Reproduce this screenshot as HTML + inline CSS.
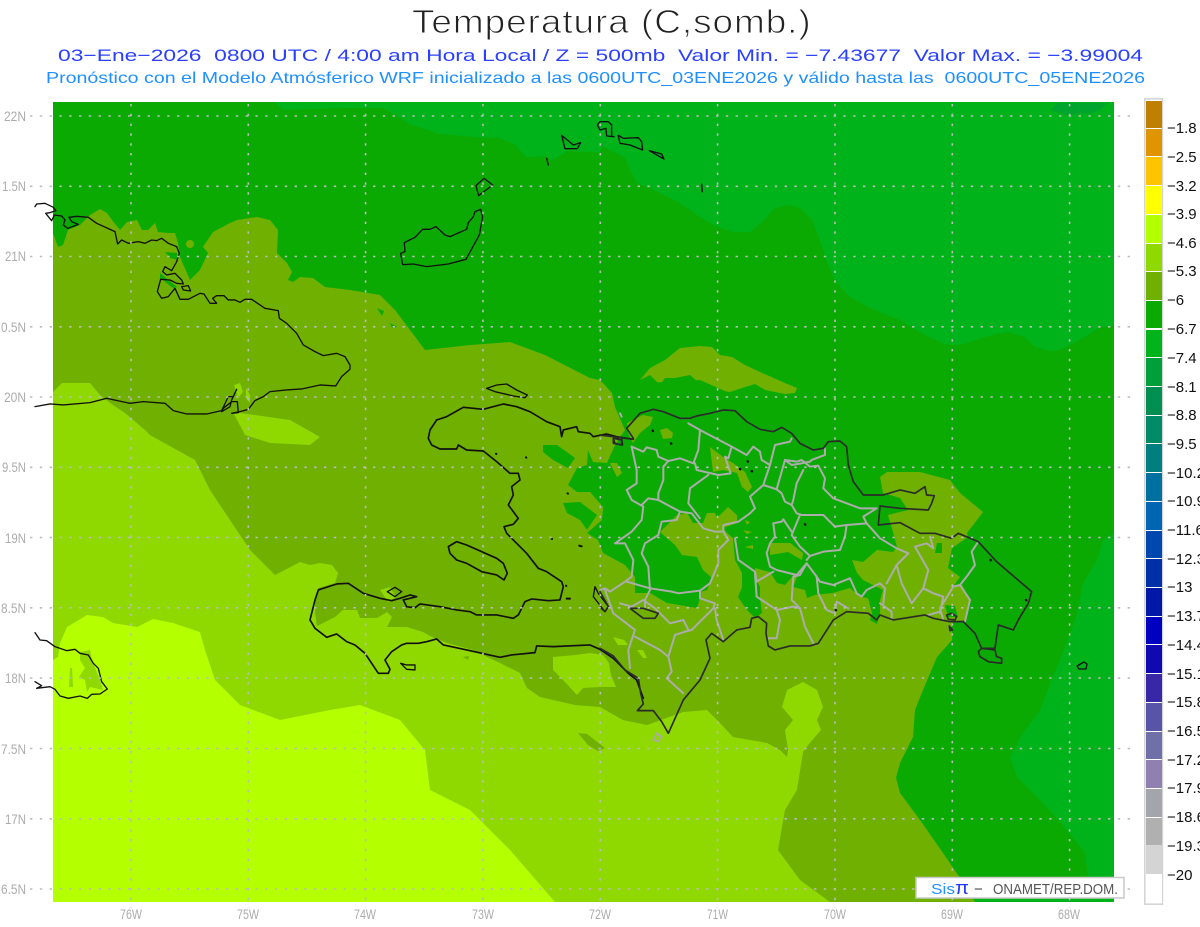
<!DOCTYPE html>
<html lang="es">
<head>
<meta charset="utf-8">
<title>Temperatura (C,somb.)</title>
<style>
html,body{margin:0;padding:0;background:#fff;width:1200px;height:927px;overflow:hidden}
svg{display:block}
text{font-family:"Liberation Sans",sans-serif;white-space:pre}
.g{fill:none;stroke:#acacac;stroke-width:6;stroke-linejoin:round;stroke-linecap:round}
.k{fill:none;stroke:#111;stroke-width:4;stroke-linejoin:round;stroke-linecap:round}
.d{fill:none;stroke:#2a2a2a;stroke-width:5;stroke-linejoin:round;stroke-linecap:round}
.t{fill:#acacac;font-size:14px}
.c{fill:#111;font-size:15px}
</style>
</head>
<body>
<svg width="1200" height="927" viewBox="0 0 1200 927" xmlns="http://www.w3.org/2000/svg">
<rect width="1200" height="927" fill="#fff"/>

<!-- titles -->
<text transform="translate(412,33) scale(1.12,1)" x="0" y="0" font-size="33" fill="#222" stroke="#fff" stroke-width="0.9" textLength="356" lengthAdjust="spacing">Temperatura (C,somb.)</text>
<text x="58" y="61" font-size="17" fill="#2b40ff" textLength="1085" lengthAdjust="spacingAndGlyphs">03−Ene−2026  0800 UTC / 4:00 am Hora Local / Z = 500mb  Valor Min. = −7.43677  Valor Max. = −3.99004</text>
<text x="46" y="83" font-size="16" fill="#1e90ff" textLength="1099" lengthAdjust="spacingAndGlyphs">Pronóstico con el Modelo Atmósferico WRF inicializado a las 0600UTC_03ENE2026 y válido hasta las  0600UTC_05ENE2026</text>

<!-- map fills -->
<svg x="53" y="102" width="1061" height="800" viewBox="53 102 1061 800">
<rect x="53" y="102" width="1061" height="800" fill="#0aaa03"/>
<!-- NE lighter -->
<polygon fill="#00b31a" points="274,102 283,110 345,108 383,108 410,124 440,134 475,137 500,138 515,145 522,152 526,157 535,157 545,156 552,160 560,156 568,151 590,152 600,152 602,146 610,150 625,158 630,170 637,183 650,188 680,203 700,217 715,226 733,232 750,232 762,222 775,208 787,205 800,208 812,220 820,240 827,262 836,282 850,297 870,308 900,320 925,335 945,344 960,345 985,337 1007,332 1025,337 1035,347 1050,351 1060,350 1085,337 1100,327 1114,326 1114,102"/>
<polygon fill="#00a52d" points="1050,110 1058,103 1107,103 1100,110 1093,113 1067,115"/>
<!-- SE lighter -->
<polygon fill="#00b31a" points="1114,533 1103,540 1097,560 1083,583 1077,613 1063,653 1050,683 1040,710 1023,733 1010,757 1017,777 1040,800 1067,830 1085,853 1088,877 1080,880 975,897 975,902 1114,902"/>
<!-- main olive -->
<polygon fill="#70b000" points="53,233 58,247 63,245 68,230 80,225 90,215 100,209 107,213 112,220 120,230 127,222 137,220 142,230 148,230 155,223 158,232 168,233 175,233 178,243 180,257 190,280 200,270 208,253 203,247 213,232 230,223 237,220 257,217 270,220 278,230 277,253 287,263 292,272 288,280 293,282 300,277 313,278 325,287 350,290 380,295 395,310 410,330 425,350 470,345 510,342 545,355 590,378 600,380 612,393 880,477 887,472 920,472 950,480 960,493 983,512 967,533 968,537 952,548 948,568 960,577 952,588 962,585 970,600 965,620 952,623 952,640 937,657 923,690 915,710 913,737 900,763 896,778 900,793 920,820 943,853 960,878 975,902 53,902"/>
<!-- olive blob north -->
<polygon fill="#70b000" points="640,380 650,368 665,360 680,348 700,346 712,347 720,355 732,357 745,365 760,372 785,383 797,388 795,393 785,394 765,390 755,384 742,388 730,392 705,388 690,375 675,378 665,378 660,385 650,375"/>
<!-- DR green -->
<polygon fill="#0aaa03" points="612,393 615,407 625,430 615,445 607,463 593,462 588,450 587,465 577,468 568,485 577,492 590,492 603,507 602,520 587,533 598,540 603,553 625,565 635,577 635,593 650,593 667,603 697,608 702,592 712,590 738,597 747,610 755,618 762,613 760,597 760,587 755,577 755,568 770,572 777,583 785,585 792,577 797,577 793,587 805,590 807,598 815,595 833,593 850,588 860,597 868,598 872,613 870,620 877,624 880,613 880,600 883,590 863,580 857,573 852,560 863,562 877,550 893,552 897,547 893,532 888,515 908,510 900,498 883,493 880,477 880,460 700,380 612,385"/>
<polygon fill="#0aaa03" points="543,445 557,445 575,458 568,468 553,460 543,452"/>
<polygon fill="#0aaa03" points="563,503 580,502 597,515 587,530 580,520 567,513"/>
<!-- olive patches over DR green -->
<polygon fill="#70b000" points="660,532 675,545 682,555 697,557 703,570 712,578 707,590 700,592 700,613 743,613 738,597 742,587 742,573 735,560 733,538 727,533 723,528 737,523 737,515 728,507 717,518 715,513 707,513 703,523 693,523 687,513 677,515"/>
<polygon fill="#70b000" points="660,430 667,428 673,433 672,438 663,439"/>
<polygon fill="#70b000" points="627,423 643,415 653,417 650,425 640,433 633,443 628,433"/>
<polygon fill="#70b000" points="610,463 617,463 622,473 617,477"/>
<polygon fill="#70b000" points="710,447 723,457 733,463 745,472 752,487 748,492 742,487 737,473 723,470 713,472"/>
<polygon fill="#70b000" points="770,543 790,543 803,553 802,560 788,552 770,555"/>
<polygon fill="#70b000" points="600,503 603,510 600,517"/>
<polygon fill="#70b000" points="745,520 750,522 747,525"/>
<polygon fill="#70b000" points="743,530 752,532 747,534"/>
<polygon fill="#70b000" points="745,547 753,545 753,549"/>
<!-- green spots in olive -->
<polygon fill="#0aaa03" points="937,543 942,543 942,553 935,553"/>
<polygon fill="#0aaa03" points="945,605 955,606 958,617 948,617"/>
<polygon fill="#0aaa03" points="165,252 177,253 178,260 170,258"/>
<polygon fill="#0aaa03" points="160,273 177,287 173,288 160,278"/>
<polygon fill="#0aaa03" points="377,308 384,311 382,316"/>
<polygon fill="#0aaa03" points="390,323 397,327 392,328"/>
<circle cx="190" cy="244" r="4" fill="#70b000"/>
<!-- green2 -->
<polygon fill="#8fd800" points="53,392 62,383 90,383 100,395 113,405 125,413 145,430 150,435 195,460 210,490 250,550 275,575 300,562 310,565 320,563 332,565 338,573 335,583 318,588 315,597 315,613 317,626 335,617 343,610 357,610 360,618 377,618 387,612 392,617 387,627 407,627 423,632 432,637 447,643 473,650 487,657 500,663 520,673 527,688 540,697 575,705 600,707 623,720 647,725 683,712 707,710 720,723 733,737 767,743 780,750 787,757 788,750 785,730 793,720 782,707 787,690 803,682 817,690 823,707 817,720 821,730 808,745 803,752 797,790 785,810 778,850 800,880 830,902 53,902"/>
<polygon fill="#8fd800" points="553,657 575,655 590,653 603,655 609,663 611,675 616,687 600,687 583,688 577,695 563,680 553,670"/>
<polygon fill="#8fd800" points="233,412 255,415 290,420 320,437 310,445 270,443 245,435"/>
<polygon fill="#8fd800" points="234,385 240,383 243,392 238,398"/>
<polygon fill="#8fd800" points="246,388 250,395 250,403 246,398"/>
<polygon fill="#8fd800" points="380,590 390,587 396,597 388,602"/>
<polygon fill="#8fd800" points="370,637 376,634 377,638 371,640"/>
<polygon fill="#8fd800" points="613,637 624,640 628,645 618,645"/>
<polygon fill="#8fd800" points="637,650 643,650 647,658 643,658"/>
<polygon fill="#70b000" points="578,733 587,734 605,748 598,751 588,745"/>
<polygon fill="#70b000" points="463,657 469,656 468,660"/>
<!-- lime -->
<polygon fill="#b4ff00" points="53,660 58,657 60,643 67,627 87,615 103,617 113,623 137,627 153,619 173,623 200,632 205,650 215,680 240,705 280,720 330,710 360,705 400,720 425,750 430,790 470,810 510,850 555,902 53,902"/>
<polygon fill="#8fd800" points="80,652 90,650 92,660 100,680 103,690 90,687 87,692 85,680 79,677 85,668 80,660"/>
<polygon fill="#8fd800" points="70,668 72,668 73,687 69,687"/>
</svg>

<!-- coast: Cuba (zoom 7) -->
<g transform="translate(0,90) scale(.3333)">
<path class="k" d="M105,350 L110,342 L135,340 L160,352 L168,362 L150,368 L137,370 L155,392 L163,375 L185,378 L195,390 L190,405 L203,415 L235,403 L215,395 L207,382 L230,379 L265,382 L290,400 L345,425 L353,462 L365,450 L385,460 L415,455 L435,460 L455,450 L470,452 L485,445 L505,460 L530,470 L538,490 L530,515 L515,542 L495,530 L488,545 L500,555 L525,550 L545,570 L550,582 L530,580 L510,570 L482,568 L472,605 L485,625 L505,620 L525,595 L540,628 L565,628 L600,610 L612,612 L630,640 L650,640 L638,625 L650,617 L672,617 L685,630 L705,630 L720,637 L735,628 L755,628 L795,655 L835,662 L838,685 L860,700 L890,730 L910,765 L945,785 L970,797 L1010,790 L1035,800 L1050,825 L1050,838 L1025,860 L1007,888 L960,885 L905,897 L860,900 L810,905 L790,920 L765,932 L745,958 L720,965 L695,970 L715,968 L712,935 L695,935 L670,955 L665,965 L690,950 L695,930 L710,898 L700,920 L685,920 L665,962 L620,972 L560,972 L520,962 L495,940 L430,935 L390,940 L320,925 L270,938 L190,945 L150,942 L105,950"/>
<path class="k" d="M545,590 L565,587 L572,603 L550,600 Z"/>
</g>
<!-- coast: Jamaica (zoom 10) -->
<g transform="translate(0,600) scale(.3333)">
<path class="k" d="M105,98 L120,120 L140,122 L165,140 L200,152 L225,148 L240,160 L265,165 L280,190 L295,205 L305,245 L322,267 L300,282 L275,283 L262,295 L240,288 L205,295 L180,288 L165,268 L150,260 L110,265 L125,257 L105,245"/>
</g>
<!-- coast: Bahamas (zoom 9) -->
<g transform="translate(380,100) scale(.3333)">
<path class="k" d="M62,460 L75,455 L73,428 L105,412 L128,388 L150,388 L168,380 L195,405 L210,410 L260,388 L265,368 L280,350 L285,335 L302,328 L308,350 L298,405 L258,478 L205,492 L140,500 L100,492 L68,494 Z"/>
<path class="k" d="M288,257 L312,235 L338,255 L296,287 Z"/>
<path class="k" d="M545,106 L580,135 L602,128 L592,146 L555,146 Z"/>
<path class="k" d="M652,75 L660,65 L685,65 L695,75 L695,108 L702,110 L680,108 L678,85 L660,90 Z"/>
<path class="k" d="M715,106 L730,115 L775,113 L785,125 L788,150 L750,135 L720,130 Z"/>
<path class="k" d="M808,152 L845,162 L852,177 Z"/>
<path class="k" d="M500,175 L505,195 M965,253 L967,275"/>
</g>
<!-- coast: Haiti (zoom 6) -->
<g transform="translate(300,380) scale(.3333)">
<path class="k" d="M560,25 L590,15 L620,12 L650,30 L682,45 L675,53 L640,48 L585,35 Z"/>
<path class="k" style="stroke-width:5" d="M410,120 L440,110 L490,82 L550,88 L610,72 L650,80 L690,95 L740,125 L780,140 L785,170 L790,150 L830,140 L835,155 L870,160 L880,170 L920,162 L950,170 L1000,178"/>
<path class="k" style="stroke-width:5" d="M410,120 L390,150 L385,175 L395,195 L420,207 L470,207 L475,195 L500,210 L550,213 L590,245 L630,280 L655,280 L660,300 L635,320 L640,345 L625,375 L655,415 L640,433 L612,440 L620,460 L650,490 L680,520 L715,565 L740,575 L785,605 L790,620 L780,660 L745,662 L695,657 L675,665 L655,705 L640,715 L590,705 L530,705 L510,695 L470,690 L420,680 L360,672 L345,683 L320,680 L310,660 L350,650 L330,645 L300,655 L275,662 L240,655 L190,640 L145,610 L110,612 L55,630 L45,660 L30,720 L45,745 L80,772 L110,762 L140,785 L165,795 L195,820 L235,880 L265,880 L270,868 L255,840 L275,815 L305,795 L320,790 L355,790 L380,785 L410,777 L430,795 L500,810 L600,832 L635,825 L705,818 L710,798 L760,800 L870,795 L900,808 L940,835 L985,880 L1010,900 L1030,955"/>
<path class="k" style="stroke-width:5" d="M445,500 L470,485 L500,495 L590,535 L610,550 L622,580 L612,600 L590,585 L545,575 L500,550 L470,540 L450,520 Z"/>
<path class="k" d="M262,635 L285,622 L305,635 L285,650 Z"/>
<path class="k" d="M302,850 L320,855 L345,855 L345,870 L320,868 Z"/>
<path class="k" d="M885,620 L880,650 L915,695 L925,680 L895,640 Z"/>
<path class="k" d="M940,175 L965,172 L968,195 L945,190 Z"/>
<path class="k" style="stroke-width:6" d="M588,221 L589,222 M678,232 L679,233 M803,340 L804,341 M755,476 L756,477 M838,497 L845,499 M800,656 L810,656 M798,617 L799,618"/>
</g>
<!-- provinces + coast: Dominican Republic (zoom 5) -->
<g transform="translate(600,400) scale(.3333)">
<path class="g" d="M95,140 L110,210 L110,250 L80,270 L95,300 L130,320 L125,360 L95,395 L45,430 L75,430 L100,480 L95,530 L75,545 L30,575 L15,565 L0,570"/>
<path class="g" d="M15,570 L35,625 L40,640 L105,690 L85,750 L90,805"/>
<path class="g" d="M95,140 L130,155 L140,142 L170,150 L175,170 L205,183 L240,175 L280,190 L295,150 L300,90 L265,70"/>
<path class="g" d="M300,90 L395,140 L440,165 L460,140 L480,155 L485,180 L510,195 L525,135 L570,125 L575,115"/>
<path class="g" d="M395,140 L385,175 L375,170 L392,220 L355,225 L290,210 L285,190"/>
<path class="g" d="M205,183 L190,200 L190,240 L175,280 L175,300 L145,295 L125,315"/>
<path class="g" d="M175,300 L240,335 L230,360 L185,365 L175,405 L135,430 L125,460 L145,500 L150,570 L135,600 L135,625"/>
<path class="g" d="M240,335 L275,340 L310,385 L345,395 L370,395 L370,375 L415,365 L450,340 L465,325 L450,290 L490,255 L510,195"/>
<path class="g" d="M325,225 L270,265 L265,310 L300,355"/>
<path class="g" d="M490,255 L530,268 L545,215 L555,180 L590,185 L605,180 L630,200 L655,197 L675,235 L670,265 L700,295 L780,325 L830,325"/>
<path class="g" d="M530,268 L545,280 L555,305 L575,315 L590,340 L605,345 L670,345 L690,365 L705,380 L740,375 L735,410 L720,450 L670,455 L630,468 L620,480"/>
<path class="g" d="M555,180 L575,195 L605,190 L630,185 L635,180 L675,165 L675,145"/>
<path class="g" d="M610,210 L590,250 L580,300 L575,315"/>
<path class="g" d="M600,345 L575,405 L600,440 L630,468"/>
<path class="g" d="M520,370 L545,365 L550,358 L575,395"/>
<path class="g" d="M520,370 L525,410 L510,430 L500,460 L510,500 L530,510 L590,525 L620,490 L650,530 L660,545 L700,555 L750,535 L770,580 L785,590 L800,570 L840,550 L855,565 L850,610"/>
<path class="g" d="M620,490 L600,525 L580,530 L575,600 L600,625 L615,680 L640,730"/>
<path class="g" d="M740,375 L800,370 L790,350 L830,325"/>
<path class="g" d="M800,370 L840,415 L890,445 L925,460 L890,495 L860,550"/>
<path class="g" d="M890,495 L905,550 L935,610 L970,565 L985,510 L945,440 L980,430 L1000,445 L990,410"/>
<path class="g" d="M970,565 L1000,580 L1030,590 L1020,640"/>
<path class="g" d="M1135,425 L1115,455 L1125,495 L1100,530 L1080,555 L1060,560 L1020,625 L1030,660"/>
<path class="g" d="M1080,555 L1110,600 L1095,665"/>
<path class="g" d="M465,520 L470,590 L530,630 L540,660 L530,715 L505,715"/>
<path class="g" d="M530,630 L580,620 L600,625"/>
<path class="g" d="M405,415 L415,480 L465,515 L470,545 L520,515"/>
<path class="g" d="M370,395 L385,420 L355,450 L355,490 L330,550 L300,572 L235,580 L215,575 L150,565 L80,545"/>
<path class="g" d="M300,572 L300,595 L345,610 L340,625 L275,690 L255,695 L225,705 L205,770 L215,815 L200,835 L250,880"/>
<path class="g" d="M345,625 L350,660 L370,720"/>
<path class="g" d="M60,610 L95,620 L130,600 L165,625 L180,640 L210,670 L250,660 L265,690"/>
<path class="g" d="M105,710 L180,750 L205,770"/>
<path class="g" d="M650,530 L655,580 L680,630 L705,640 L710,605 L745,625"/>
<path class="g" d="M840,610 L875,635 L875,660"/>
<path class="g" d="M1020,635 L985,645"/>
<path class="g" d="M60,40 L65,50"/>
<path class="d" d="M100,115 L80,85 L120,40 L160,28 L190,35 L240,55 L270,55 L290,48 L330,40 L370,30 L405,32 L440,65 L480,88 L520,95 L545,82 L575,100 L600,130 L640,150 L670,145 L685,125 L720,123 L740,140 L745,195 L760,245 L790,285 L850,285 L900,270 L945,280 L975,260 L980,285 L1003,287 L995,310 L985,330 L900,325 L840,318 L835,375 L900,368 L960,400 L1005,400 L1055,415 L1075,400 L1135,425 L1190,485 L1295,575 L1285,610 L1255,660 L1240,690 L1195,675 L1185,745 L1145,745 L1125,700 L1090,665 L1050,665 L1000,655 L975,645 L880,660 L840,645 L830,660 L805,640 L740,635 L700,660 L655,730 L630,738 L570,738 L525,750 L505,738 L498,700 L500,670 L475,650 L455,655 L450,682 L410,690 L370,725 L335,700 L318,720 L330,775 L300,840 L250,900 L205,1000 L185,965 L160,932 L112,932 L130,912 L122,880 L115,835 L75,810 L40,768 L0,745"/>
<path class="d" d="M1135,755 L1145,745 L1185,750 L1190,770 L1205,775 L1205,790 L1165,785 L1140,770 Z"/>
<path class="d" d="M90,625 L130,625 L175,640 L165,655 L130,655 Z"/>
<path class="d" d="M0,575 L25,620 L15,635 L0,622"/>
<path class="d" d="M1040,645 L1055,640 L1070,650 L1065,660 L1045,658 Z"/>
<path class="d" d="M1048,678 L1058,690 L1050,692 Z"/>
<path class="d" d="M0,105 L100,118 M40,115 L65,120 L65,135 L40,130 Z"/>
<path d="M160,1020 L170,1000 L185,1010 L175,1025 Z" fill="none" stroke="#aaa" stroke-width="5"/>
<path class="k" style="stroke-width:7" d="M158,92 L159,93 M213,130 L214,131 M443,184 L444,185 M420,207 L421,208 M455,213 L456,214 M1172,480 L1173,481 M1278,600 L1279,601 M615,373 L616,374 M707,630 L708,631"/>
</g>
<path class="k" style="stroke-width:1.3" d="M1077,666 L1084,662 L1087,664 L1086,669 L1079,669 Z"/>

<!-- grid -->
<g fill="none" stroke="#bcbcbc" stroke-width="1.6" stroke-dasharray="2.4 7.4">
<path d="M30,116H1134M30,186.3H1134M30,256.5H1134M30,326.8H1134M30,397H1134M30,467.3H1134M30,537.5H1134M30,607.8H1134M30,678H1134M30,748.5H1134M30,818.8H1134M30,889H1134"/>
<path d="M131,104V908M248.3,104V908M365.6,104V908M483,104V908M600.3,104V908M717.6,104V908M835,104V908M952.3,104V908M1069.6,104V908"/>
</g>

<!-- axis labels -->
<g>
<text x="4" y="121" class="t" textLength="22" lengthAdjust="spacingAndGlyphs">22N</text>
<text x="2" y="191" class="t" textLength="24" lengthAdjust="spacingAndGlyphs">1.5N</text>
<text x="5" y="261" class="t" textLength="21" lengthAdjust="spacingAndGlyphs">21N</text>
<text x="1" y="332" class="t" textLength="25" lengthAdjust="spacingAndGlyphs">0.5N</text>
<text x="4" y="402" class="t" textLength="22" lengthAdjust="spacingAndGlyphs">20N</text>
<text x="2" y="472" class="t" textLength="24" lengthAdjust="spacingAndGlyphs">9.5N</text>
<text x="5" y="543" class="t" textLength="21" lengthAdjust="spacingAndGlyphs">19N</text>
<text x="1" y="613" class="t" textLength="25" lengthAdjust="spacingAndGlyphs">8.5N</text>
<text x="5" y="683" class="t" textLength="21" lengthAdjust="spacingAndGlyphs">18N</text>
<text x="1" y="754" class="t" textLength="25" lengthAdjust="spacingAndGlyphs">7.5N</text>
<text x="5" y="824" class="t" textLength="21" lengthAdjust="spacingAndGlyphs">17N</text>
<text x="1" y="894" class="t" textLength="25" lengthAdjust="spacingAndGlyphs">6.5N</text>
</g>
<g>
<text x="120" y="919" class="t" textLength="22" lengthAdjust="spacingAndGlyphs">76W</text>
<text x="237" y="919" class="t" textLength="22" lengthAdjust="spacingAndGlyphs">75W</text>
<text x="354" y="919" class="t" textLength="22" lengthAdjust="spacingAndGlyphs">74W</text>
<text x="472" y="919" class="t" textLength="22" lengthAdjust="spacingAndGlyphs">73W</text>
<text x="589" y="919" class="t" textLength="22" lengthAdjust="spacingAndGlyphs">72W</text>
<text x="707" y="919" class="t" textLength="21" lengthAdjust="spacingAndGlyphs">71W</text>
<text x="824" y="919" class="t" textLength="22" lengthAdjust="spacingAndGlyphs">70W</text>
<text x="941" y="919" class="t" textLength="22" lengthAdjust="spacingAndGlyphs">69W</text>
<text x="1058" y="919" class="t" textLength="22" lengthAdjust="spacingAndGlyphs">68W</text>
</g>

<!-- credit box -->
<rect x="916" y="877.5" width="208" height="20.5" fill="#fff" stroke="#c8c8c8" stroke-width="1.5"/>
<text x="931" y="894" font-size="15" fill="#1e90ff" textLength="24" lengthAdjust="spacingAndGlyphs">Sis</text>
<text x="955" y="894" font-size="18" fill="#1c3cff" textLength="14" lengthAdjust="spacingAndGlyphs">π</text>
<text x="974" y="894" font-size="15" fill="#444">−</text>
<text x="993" y="894" font-size="14.5" fill="#555" textLength="125" lengthAdjust="spacingAndGlyphs">ONAMET/REP.DOM.</text>

<!-- colour bar -->
<rect x="1144.8" y="98.8" width="17.6" height="805.4" fill="#fff" stroke="#d4d4d4" stroke-width="1.6"/>
<g>
<rect x="1146" y="101" width="16" height="27" fill="#bf7f00"/>
<rect x="1146" y="129" width="16" height="27" fill="#e09500"/>
<rect x="1146" y="157" width="16" height="28" fill="#ffc400"/>
<rect x="1146" y="186" width="16" height="28" fill="#ffff00"/>
<rect x="1146" y="215" width="16" height="28" fill="#b4ff00"/>
<rect x="1146" y="244" width="16" height="27" fill="#8fd800"/>
<rect x="1146" y="272" width="16" height="28" fill="#70b000"/>
<rect x="1146" y="301" width="16" height="27" fill="#0aaa03"/>
<rect x="1146" y="330" width="16" height="27" fill="#00b31a"/>
<rect x="1146" y="358" width="16" height="28" fill="#009f3a"/>
<rect x="1146" y="387" width="16" height="28" fill="#008f50"/>
<rect x="1146" y="416" width="16" height="27" fill="#008a66"/>
<rect x="1146" y="444" width="16" height="28" fill="#007f80"/>
<rect x="1146" y="473" width="16" height="28" fill="#0070a0"/>
<rect x="1146" y="502" width="16" height="28" fill="#0066b4"/>
<rect x="1146" y="531" width="16" height="27" fill="#0048b0"/>
<rect x="1146" y="559" width="16" height="28" fill="#0030a8"/>
<rect x="1146" y="588" width="16" height="28" fill="#0018a8"/>
<rect x="1146" y="617" width="16" height="27" fill="#0000c0"/>
<rect x="1146" y="645" width="16" height="28" fill="#1008b0"/>
<rect x="1146" y="674" width="16" height="28" fill="#3828a8"/>
<rect x="1146" y="703" width="16" height="28" fill="#5854a8"/>
<rect x="1146" y="732" width="16" height="27" fill="#7070a8"/>
<rect x="1146" y="760" width="16" height="28" fill="#9080b0"/>
<rect x="1146" y="789" width="16" height="28" fill="#a4a4ac"/>
<rect x="1146" y="818" width="16" height="27" fill="#b0b0b0"/>
<rect x="1146" y="845" width="16" height="29" fill="#d4d4d4"/>
<rect x="1146" y="874" width="16" height="29" fill="#ffffff"/>
</g>
<g class="c">
<text x="1167" y="133" class="c">−1.8</text>
<text x="1167" y="162" class="c">−2.5</text>
<text x="1167" y="191" class="c">−3.2</text>
<text x="1167" y="219" class="c">−3.9</text>
<text x="1167" y="248" class="c">−4.6</text>
<text x="1167" y="276" class="c">−5.3</text>
<text x="1167" y="305" class="c">−6</text>
<text x="1167" y="334" class="c">−6.7</text>
<text x="1167" y="363" class="c">−7.4</text>
<text x="1167" y="392" class="c">−8.1</text>
<text x="1167" y="420" class="c">−8.8</text>
<text x="1167" y="449" class="c">−9.5</text>
<text x="1167" y="478" class="c">−10.2</text>
<text x="1167" y="506" class="c">−10.9</text>
<text x="1167" y="535" class="c">−11.6</text>
<text x="1167" y="564" class="c">−12.3</text>
<text x="1167" y="592" class="c">−13</text>
<text x="1167" y="621" class="c">−13.7</text>
<text x="1167" y="650" class="c">−14.4</text>
<text x="1167" y="679" class="c">−15.1</text>
<text x="1167" y="707" class="c">−15.8</text>
<text x="1167" y="736" class="c">−16.5</text>
<text x="1167" y="765" class="c">−17.2</text>
<text x="1167" y="793" class="c">−17.9</text>
<text x="1167" y="822" class="c">−18.6</text>
<text x="1167" y="851" class="c">−19.3</text>
<text x="1167" y="880" class="c">−20</text>
</g>
</svg>
</body>
</html>
